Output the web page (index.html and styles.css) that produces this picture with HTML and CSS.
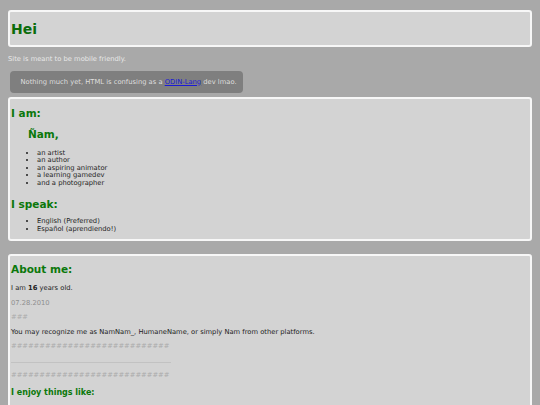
FILE: index.html
```html
<!DOCTYPE html>
<html lang="en">
<head>
<meta charset="utf-8">
<title>Hei</title>
<link rel="stylesheet" href="styles.css">
</head>
<body>
<header class="box box-head">
  <h1 class="title">Hei</h1>
</header>
<p class="tagline">Site is meant to be mobile friendly.</p>
<div class="notice">Nothing much yet, HTML is confusing as a <a href="#" class="link">ODIN-Lang</a> dev lmao.</div>

<section class="box box-intro">
  <h2 class="heading">I am:</h2>
  <h2 class="heading name">Ñam,</h2>
  <ul class="list list-roles">
    <li>an artist</li>
    <li>an author</li>
    <li>an aspiring animator</li>
    <li>a learning gamedev</li>
    <li>and a photographer</li>
  </ul>
  <h2 class="heading speak">I speak:</h2>
  <ul class="list list-langs">
    <li>English (Preferred)</li>
    <li>Español (aprendiendo!)</li>
  </ul>
</section>

<section class="box box-about">
  <h2 class="heading">About me:</h2>
  <p class="para first">I am <b>16</b> years old.</p>
  <p class="para date">07.28.2010</p>
  <p class="para faint">###</p>
  <p class="para">You may recognize me as NamNam_, HumaneName, or simply Nam from other platforms.</p>
  <p class="para faint">############################</p>
  <hr class="rule">
  <p class="para faint after-rule">############################</p>
  <h3 class="subheading">I enjoy things like:</h3>
</section>
</body>
</html>
```

FILE: styles.css
```css
html, body {
  margin: 0;
}
body {
  padding: 10px 8px 0;
  background: #a9a9a9;
  font-family: "DejaVu Sans", Verdana, sans-serif;
  font-size: 6.75px;
  line-height: 8px;
  color: #222;
}
.box {
  background: #d3d3d3;
  border: 2px solid #f7f7f7;
  border-radius: 3px;
  padding: 0 1px;
  display: flex;
  flex-direction: column;
}
.box-head {
  padding: 9px 1px 8px;
}
.title {
  margin: 0;
  font-size: 14px;
  line-height: 16px;
  font-weight: bold;
  color: #0b6c0b;
}
.tagline {
  margin: 8px 0 0;
  color: #e8e8e8;
}
.notice {
  margin: 8px 0 0 2px;
  width: 233px;
  box-sizing: border-box;
  padding: 6.7px 4px 7px 10.5px;
  background: #7f7f7f;
  color: #dedede;
  border-radius: 4px;
  white-space: nowrap;
}
.link {
  color: #1a1ad6;
  text-decoration: underline;
}
.heading {
  margin: 0;
  font-size: 10.5px;
  line-height: 12px;
  font-weight: bold;
  color: #0b780b;
}
.box-intro {
  margin-top: 4.3px;
  padding-top: 8.4px;
  padding-bottom: 6.1px;
}
.name {
  margin-top: 9px;
  margin-left: 17px;
}
.list {
  margin: 0;
  padding-left: 26px;
  line-height: 7.5px;
  color: #1e1e1e;
}
.list-roles {
  margin-top: 9.2px;
}
.speak {
  margin-top: 10.8px;
}
.list-langs {
  margin-top: 8.3px;
  line-height: 7.6px;
}
.box-about {
  margin-top: 12.3px;
  padding-top: 7.7px;
  padding-bottom: 24px;
  gap: 6.6px;
}
.para {
  margin: 0;
}
.para.first {
  margin-top: 2.1px;
}
.date {
  color: #8e8e8e;
}
.faint {
  color: #ababab;
}
.rule {
  width: 160px;
  margin: 5px 0 0;
  border: 0;
  border-top: 1px solid #c2c2c2;
  height: 0;
}
.after-rule {
  margin-top: 1.1px;
}
.subheading {
  margin: 2.7px 0 0;
  font-size: 8px;
  line-height: 10px;
  font-weight: bold;
  color: #0b780b;
}
```
